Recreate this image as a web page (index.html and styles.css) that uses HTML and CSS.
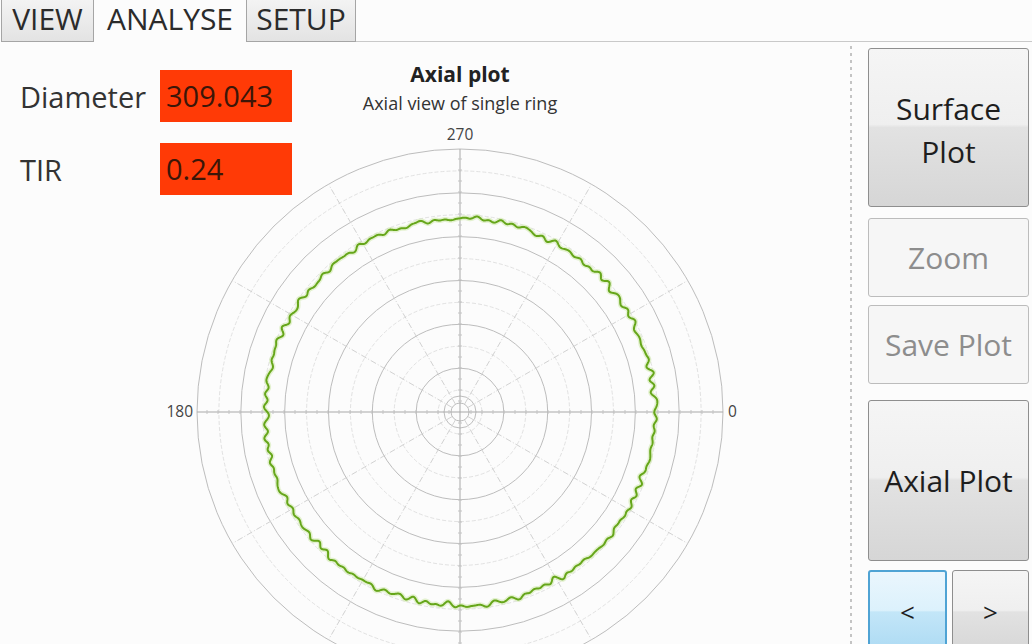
FILE: index.html
```html
<!DOCTYPE html>
<html lang="en">
<head>
    <meta charset="UTF-8">
    <meta name="viewport" content="width=device-width, initial-scale=1.0">
    <title>Ring Analyser</title>
    <link rel="stylesheet" href="styles.css">
</head>
<body>
    <div class="tabs">
        <div class="tab tab-view">VIEW</div>
        <div class="tab tab-active">ANALYSE</div>
        <div class="tab tab-setup">SETUP</div>
        <div class="tab-rest"></div>
    </div>

    <div class="workspace">
        <div class="stage">
            <div class="readouts">
                <div class="readout-label">Diameter</div>
                <div class="readout-value">309.043</div>
                <div class="readout-label">TIR</div>
                <div class="readout-value">0.24</div>
            </div>

            <div class="chart">
                <div class="chart-title">Axial plot</div>
                <div class="chart-subtitle">Axial view of single ring</div>
                <svg id="polar" class="polar" width="600" height="540" viewBox="0 0 600 540"></svg>
            </div>
        </div>

        <div class="splitter"></div>

        <div class="side">
            <button class="btn btn-tall btn-surface">Surface<br>Plot</button>
            <button class="btn btn-short" disabled>Zoom</button>
            <button class="btn btn-short btn-save" disabled>Save Plot</button>
            <button class="btn btn-tall btn-axial">Axial Plot</button>
            <div class="nav">
                <button class="btn btn-nav btn-focus">&lt;</button>
                <button class="btn btn-nav">&gt;</button>
            </div>
        </div>
    </div>

    <script src="script.js"></script>
</body>
</html>
```

FILE: styles.css
```css
body {
    margin: 0;
    font-family: "Open Sans", "Noto Sans", Arial, sans-serif;
    background: #fcfcfc;
    color: #222;
    height: 100vh;
    overflow: hidden;
}
.tabs {
    display: flex;
    height: 42px;
}
.tab {
    font-size: 30px;
    line-height: 38px;
    color: #2b2b2b;
    text-align: center;
    box-sizing: border-box;
}
.tab-view,
.tab-setup {
    background: linear-gradient(#f3f3f3, #e3e3e3);
    border: 1px solid #a5a5a5;
    border-top: none;
}
.tab-view {
    width: 93px;
    margin-left: 1px;
}
.tab-active {
    width: 152px;
    background: #fcfcfc;
}
.tab-setup {
    width: 110px;
}
.tab-rest {
    flex: 1;
    border-bottom: 1px solid #c9c9c9;
}
.workspace {
    display: grid;
    grid-template-columns: 849px 4px 1fr;
    height: calc(100vh - 42px);
}
.stage {
    display: grid;
    overflow: hidden;
}
.readouts,
.chart {
    grid-area: 1 / 1;
}
.readouts {
    display: grid;
    grid-template-columns: 140px 132px;
    grid-auto-rows: 52px;
    row-gap: 21px;
    align-items: center;
    align-content: start;
    padding: 28px 0 0 20px;
    z-index: 1;
}
.readout-label {
    font-size: 29px;
    color: #333;
}
.readout-value {
    height: 100%;
    background: #ff3a06;
    color: #3b1608;
    font-size: 29px;
    line-height: 52px;
    padding-left: 6px;
}
.chart {
    display: flex;
    flex-direction: column;
    align-items: center;
    padding: 17px 0 0 71px;
}
.chart-title {
    font-size: 21px;
    font-weight: bold;
    line-height: 30px;
    color: #222;
}
.chart-subtitle {
    font-size: 18px;
    line-height: 28px;
    color: #333;
}
.polar {
    display: block;
    flex: none;
    margin-top: 5px;
}
.ring-major { fill: none; stroke: #bdbdbd; stroke-width: 1; }
.ring-minor { fill: none; stroke: #e2e2e2; stroke-width: 1; stroke-dasharray: 4 2; }
.spoke { stroke: #d2d2d2; stroke-width: 1; stroke-dasharray: 6 2 1 2; }
.axis { stroke: #a8a8a8; stroke-width: 1; }
.tick { stroke: #c4c4c4; stroke-width: 1; }
.axis-label { font-size: 15.5px; fill: #444; font-family: "Open Sans", Arial, sans-serif; }
.trace-glow { fill: none; stroke: #c6e49a; stroke-width: 5; opacity: 0.45; }
.trace { fill: none; stroke: #66a61a; stroke-width: 2; stroke-linejoin: round; }
.splitter {
    margin-top: 4px;
    background: repeating-linear-gradient(#c4c4c4 0 3px, transparent 3px 7px);
    width: 2px;
    justify-self: center;
}
.side {
    display: flex;
    flex-direction: column;
    padding: 6px 3px 0 15px;
}
.btn {
    font-family: inherit;
    font-size: 30px;
    line-height: 1.45;
    color: #1e1e1e;
    border: 1px solid #8e8e8e;
    border-radius: 3px;
    background: linear-gradient(#f5f5f5 0%, #efefef 48%, #e2e2e2 50%, #d6d6d6 100%);
    padding: 0;
    box-sizing: border-box;
}
.btn-tall {
    height: 159px;
}
.btn-surface {
    padding-top: 5px;
}
.btn-short {
    height: 79px;
    margin-top: 11px;
}
.btn-save {
    margin-top: 8px;
}
.btn-axial {
    height: 161px;
    margin-top: 16px;
}
.btn:disabled {
    color: #8d8d8d;
    background: #f6f6f6;
    border-color: #bcbcbc;
}
.nav {
    display: flex;
    gap: 5px;
    margin-top: 9px;
}
.btn-nav {
    flex: 1;
    height: 84px;
    font-size: 26px;
    line-height: 60px;
    align-self: flex-start;
}
.btn-focus {
    border: 2px solid #4fa3d4;
    background: linear-gradient(#eaf6fd 0%, #dcf1fc 48%, #c3e6f8 50%, #acdaf3 100%);
}
```

FILE: script.js
```js
// Polar plot of a single ring's radial profile
const NS = 'http://www.w3.org/2000/svg';
const plot = document.getElementById('polar');
const cx = 300, cy = 290, R = 263;

function add(tag, attrs, text) {
    const el = document.createElementNS(NS, tag);
    for (const k in attrs) el.setAttribute(k, attrs[k]);
    if (text) el.textContent = text;
    plot.appendChild(el);
    return el;
}

// grid rings, minor ones dashed between the major ones
for (let i = 1; i <= 12; i++) {
    add('circle', { cx: cx, cy: cy, r: R * i / 12, class: i % 2 ? 'ring-minor' : 'ring-major' });
}
[9, 16].forEach(r => add('circle', { cx: cx, cy: cy, r: r, class: 'ring-major' }));

// spokes every 30 degrees
for (let a = 0; a < 360; a += 30) {
    if (a % 90 === 0) continue;
    const t = a * Math.PI / 180;
    add('line', {
        x1: cx + 9 * Math.cos(t), y1: cy + 9 * Math.sin(t),
        x2: cx + R * Math.cos(t), y2: cy + R * Math.sin(t),
        class: 'spoke'
    });
}

// main axes with small ticks
add('line', { x1: cx - R, y1: cy, x2: cx + R, y2: cy, class: 'axis' });
add('line', { x1: cx, y1: cy - R, x2: cx, y2: cy + R, class: 'axis' });
for (let d = 11; d < R; d += 11) {
    add('line', { x1: cx + d, y1: cy - 2, x2: cx + d, y2: cy + 2, class: 'tick' });
    add('line', { x1: cx - d, y1: cy - 2, x2: cx - d, y2: cy + 2, class: 'tick' });
    add('line', { x1: cx - 2, y1: cy + d, x2: cx + 2, y2: cy + d, class: 'tick' });
    add('line', { x1: cx - 2, y1: cy - d, x2: cx + 2, y2: cy - d, class: 'tick' });
}

add('text', { x: cx, y: cy - R - 9, 'text-anchor': 'middle', class: 'axis-label' }, '270');
add('text', { x: cx - R - 4, y: cy + 5, 'text-anchor': 'end', class: 'axis-label' }, '180');
add('text', { x: cx + R + 5, y: cy + 5, class: 'axis-label' }, '0');

// measured profile: nominal radius plus surface noise
let seed = 7;
function rand() {
    seed = (seed * 16807) % 2147483647;
    return seed / 2147483647;
}
const harmonics = [];
for (let k = 0; k < 12; k++) {
    harmonics.push({ f: 25 + Math.floor(rand() * 90), a: 0.25 + rand() * 0.5, p: rand() * 6.28 });
}

function radius(t) {
    let r = 194.2 + 0.6 * Math.cos(2 * t + 0.4) + 0.7 * Math.sin(9 * t + 1.3);
    harmonics.forEach(h => { r += h.a * Math.sin(h.f * t + h.p); });
    return r;
}

let d = '';
const steps = 1400;
for (let i = 0; i <= steps; i++) {
    const t = i / steps * Math.PI * 2;
    const r = radius(t);
    const x = (cx + r * Math.cos(t)).toFixed(2);
    const y = (cy + r * Math.sin(t)).toFixed(2);
    d += (i ? 'L' : 'M') + x + ' ' + y;
}
add('path', { d: d, class: 'trace-glow' });
add('path', { d: d, class: 'trace' });
```
